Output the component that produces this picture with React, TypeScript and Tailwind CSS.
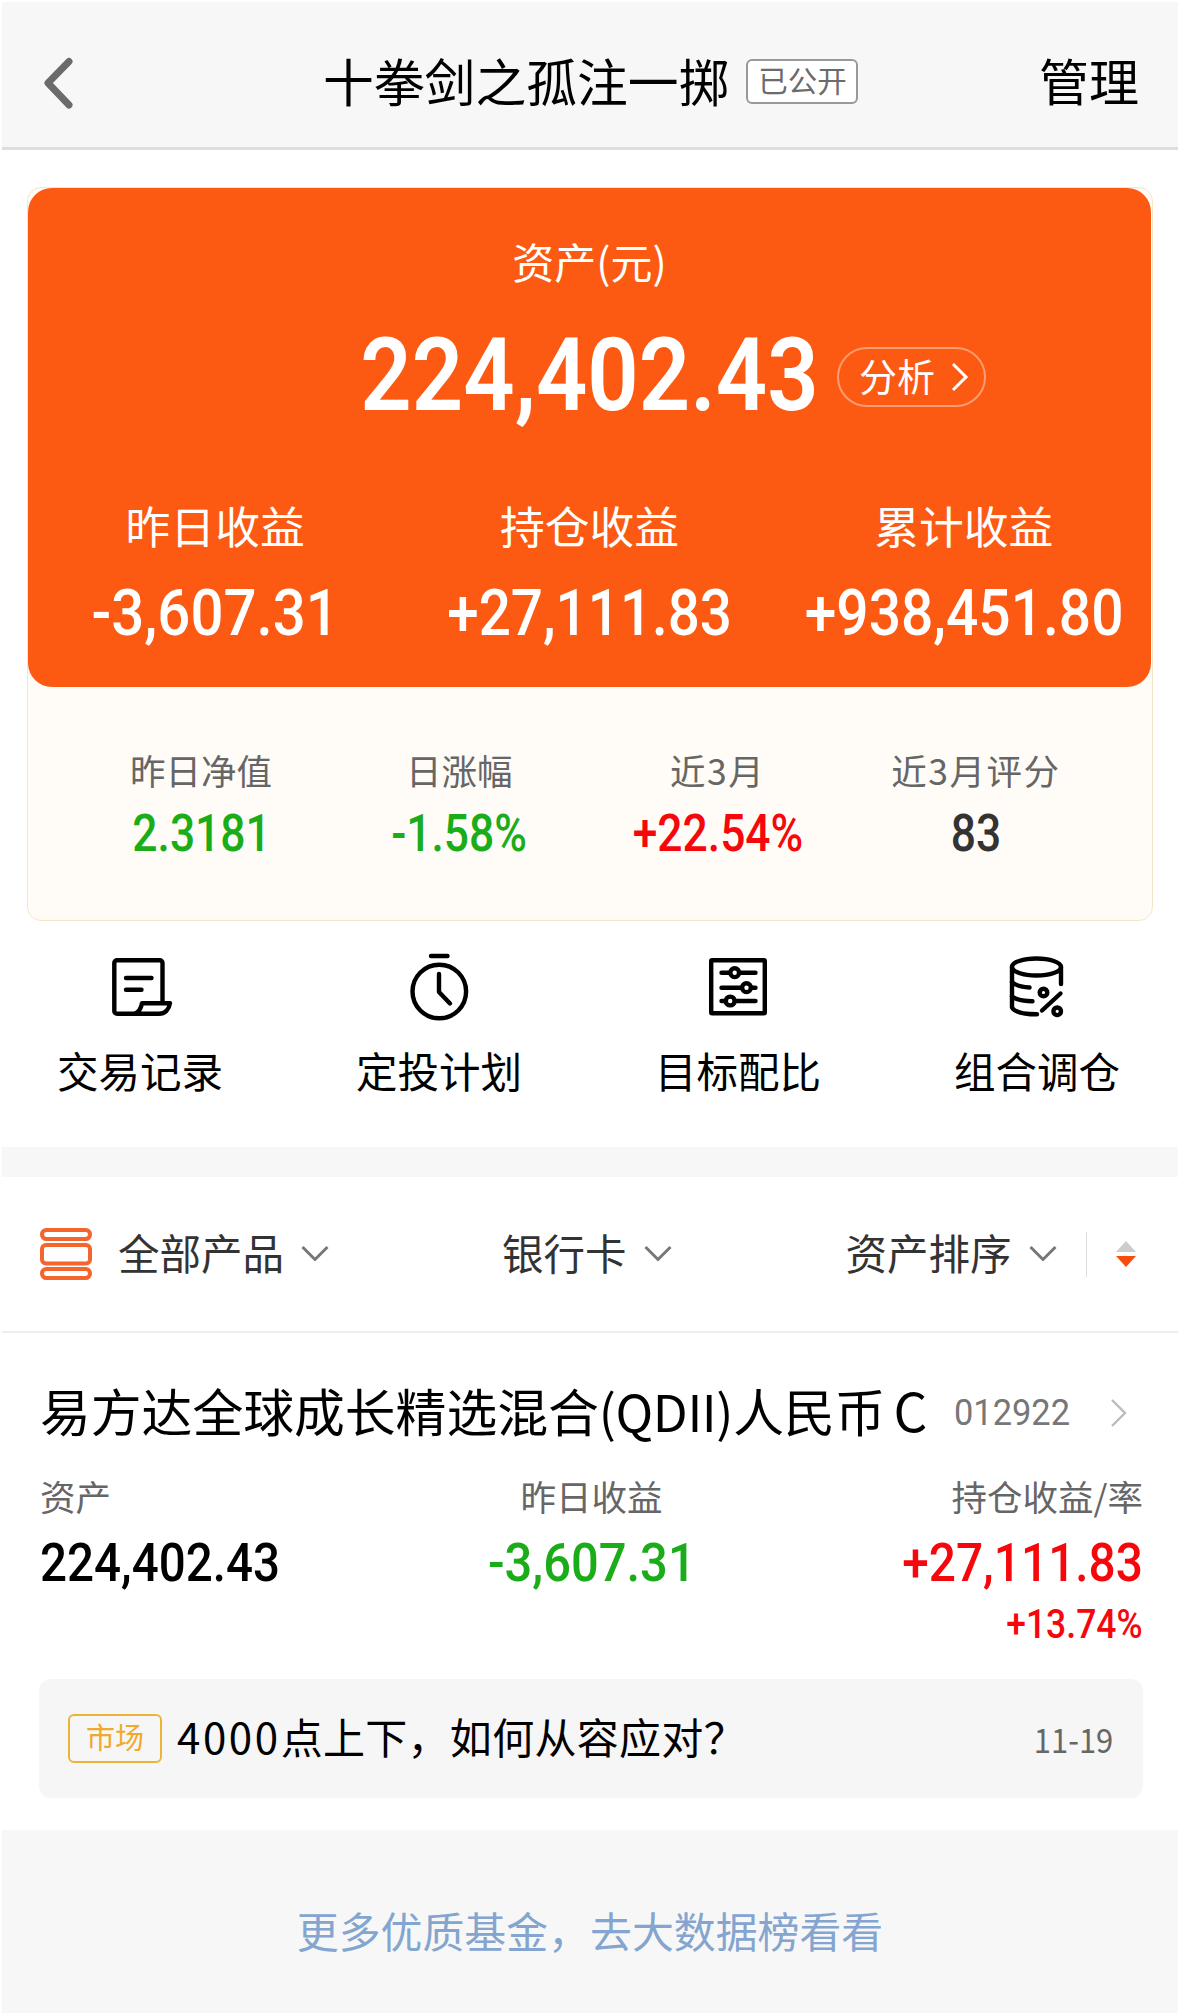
import type { ReactNode } from "react";

const SUMMARY = [
  { label: "昨日收益", value: "-3,607.31", scale: "scale-x-[0.895]" },
  { label: "持仓收益", value: "+27,111.83", scale: "scale-x-[0.87]" },
  { label: "累计收益", value: "+938,451.80", scale: "scale-x-[0.875]" },
];

const STATS = [
  { label: "昨日净值", value: "2.3181", color: "text-[#1aad19]", spacing: "" },
  { label: "日涨幅", value: "-1.58%", color: "text-[#1aad19]", spacing: "" },
  { label: "近3月", value: "+22.54%", color: "text-[#f5070b]", spacing: "tracking-[1.500px]" },
  { label: "近3月评分", value: "83", color: "text-[#333333]", spacing: "tracking-[1.500px]" },
];

function ActionIcon({ children }: { children: ReactNode }) {
  return (
    <svg
      viewBox="0 0 72 72"
      className="size-[72px]"
      fill="none"
      stroke="#000"
      strokeWidth="4.4"
      strokeLinecap="round"
      strokeLinejoin="round"
    >
      {children}
    </svg>
  );
}

const ACTIONS = [
  {
    label: "交易记录",
    icon: (
      <>
        <path d="M58.500 50V11A2.800 2.800 0 0 0 55.700 8.200H13.100A2.800 2.800 0 0 0 10.300 11V59A2.800 2.800 0 0 0 13.100 61.800H55C61 61.800 65 57.500 66 51.200H38C37 57.500 34.500 61 29.500 61.800" />
        <path d="M22 26H47.500M22 37.800H37.500" />
      </>
    ),
  },
  {
    label: "定投计划",
    icon: (
      <>
        <circle cx="36.300" cy="39.500" r="26.800" />
        <path d="M28 4H44.500M36 22V40L47 51.500" />
      </>
    ),
  },
  {
    label: "目标配比",
    icon: (
      <>
        <rect x="9.200" y="8.200" width="53.600" height="53" rx="1" />
        <path d="M19.500 20.700H53.500M19.500 35.700H53.500M19.500 49H53.500" />
        <circle cx="32.700" cy="20.700" r="4.400" fill="#fff" />
        <circle cx="44.500" cy="35.700" r="4.400" fill="#fff" />
        <circle cx="28.200" cy="49" r="4.400" fill="#fff" />
      </>
    ),
  },
  {
    label: "组合调仓",
    icon: (
      <>
        <ellipse cx="35.500" cy="15" rx="24.500" ry="8.500" />
        <path d="M11 15V55.500C13.500 60 23.500 62.300 36 62.300M60 15V32" />
        <path d="M11 30C14.500 33.500 20.500 35 28.500 35.500M11 44.500C15.500 48 22.500 49.200 31.500 49.200" />
        <path d="M59.500 41.500L41 58.500" />
        <circle cx="42.500" cy="40.500" r="3.800" />
        <circle cx="56.200" cy="59.300" r="3.800" />
      </>
    ),
  },
];

function ChevronDown() {
  return (
    <svg viewBox="0 0 28 18" className="h-[18px] w-7" fill="none" stroke="#777" strokeWidth="3">
      <path d="M1.500 2L14 14.500L26.500 2" />
    </svg>
  );
}

export default function App() {
  return (
    <div className="h-[2015px] w-[1180px] bg-white p-[2px] font-['Noto_Sans_CJK_SC',sans-serif] text-black">
      {/* Title bar */}
      <header className="relative flex h-[148px] items-center justify-between border-b-[3px] border-[#dedede] bg-[#f7f7f7] pr-[39px] pl-[40px]">
        <svg viewBox="0 0 32 52" className="mt-[16px] h-[52px] w-8" fill="none" stroke="#6b6b6b" strokeWidth="7" strokeLinecap="round" strokeLinejoin="round">
          <path d="M27 4.500L6 26L27 48" />
        </svg>
        <div className="absolute top-[38px] left-[321px] flex items-center">
          <h1 className="text-[50.800px] leading-[80px]">十拳剑之孤注一掷</h1>
          <span className="mt-[2px] ml-[17px] h-[45px] w-[112px] rounded-md border-2 border-[#999] bg-white text-center text-[29.500px] leading-[37px] text-[#6b6b6b]">
            已公开
          </span>
        </div>
        <button className="mt-[8px] text-[50px] leading-[80px]">管理</button>
      </header>

      {/* Asset card */}
      <section className="mx-[25px] mt-[37px] h-[734px] rounded-[14px] border border-[#f6e6c8] bg-[#fffcf7] text-center">
        <div className="mr-px h-[499px] rounded-[24px] bg-[#fc5a12] pt-[41px] text-white">
          <div className="text-[42px] leading-[64px]">资产(元)</div>
          <div className="relative mt-[22px] font-['Roboto'] text-[102px] leading-[120px] font-semibold">
            <span className="inline-block scale-x-[0.883]">224,402.43</span>
            <button className="absolute top-[32px] left-[809px] flex h-[60px] w-[149px] items-center rounded-full border-2 border-white/40 pl-[20px] font-['Noto_Sans_CJK_SC'] text-[38px] leading-none font-normal">
              <span className="-mt-[4px]">分析</span>
              <svg viewBox="0 0 18 30" className="ml-[16px] h-[30px] w-[18px]" fill="none" stroke="currentColor" strokeWidth="3">
                <path d="M2 2L15 15L2 28" />
              </svg>
            </button>
          </div>
          <div className="mt-[56px] grid grid-cols-3">
            {SUMMARY.map((s) => (
              <div key={s.label}>
                <div className="text-[44.800px] leading-[68px]">{s.label}</div>
                <div className="mt-[15px] font-['Roboto'] text-[65px] leading-[78px] font-medium">
                  <span className={`inline-block ${s.scale}`}>{s.value}</span>
                </div>
              </div>
            ))}
          </div>
        </div>
        <div className="mr-[47px] ml-[44px] grid grid-cols-4 pt-[56px]">
          {STATS.map((s) => (
            <div key={s.label}>
              <div className={`text-[35.500px] leading-[54px] text-[#666] ${s.spacing}`}>{s.label}</div>
              <div className={`mt-[7px] font-['Roboto'] text-[51px] leading-[60px] font-medium ${s.color}`}>
                <span className="inline-block scale-x-[0.87]">{s.value}</span>
              </div>
            </div>
          ))}
        </div>
      </section>

      {/* Quick actions */}
      <nav className="flex h-[226px] justify-between pt-[31px] pr-[58px] pl-[55px]">
        {ACTIONS.map((a) => (
          <div key={a.label} className="flex flex-col items-center">
            <ActionIcon>{a.icon}</ActionIcon>
            <span className="mt-[15px] text-[41.500px] leading-[62px]">{a.label}</span>
          </div>
        ))}
      </nav>
      <div className="h-[30px] bg-[#f7f7f7]" />

      {/* Filters */}
      <div className="flex h-[156px] items-center border-b-2 border-[#eeeeee] pl-[38px] text-[41.500px] text-[#333]">
        <svg viewBox="0 0 52 52" className="size-[52px]" fill="#fff" stroke="#f4642c" strokeWidth="4">
          <rect x="2" y="2" width="48" height="9" rx="4.400" />
          <rect x="2" y="17" width="48" height="18.500" rx="4" />
          <rect x="2" y="41" width="48" height="9" rx="4.400" />
        </svg>
        <span className="mr-[17px] -mt-[3px] ml-[26px]">全部产品</span>
        <ChevronDown />
        <span className="mr-[17px] -mt-[3px] ml-[173px]">银行卡</span>
        <ChevronDown />
        <span className="mr-[17px] -mt-[3px] ml-[174px]">资产排序</span>
        <ChevronDown />
        <div className="ml-[29px] h-[45px] w-px bg-[#ddd]" />
        <svg viewBox="0 0 20 26" className="ml-[29px] h-[26px] w-5">
          <path d="M10 0L20 11H0Z" fill="#ccc" />
          <path d="M0 15H20L10 26Z" fill="#fa4b0c" />
        </svg>
      </div>

      {/* Fund */}
      <section className="h-[497px] pt-[42px] pr-[35px] pl-[38px]">
        <div className="flex h-[76px] items-center">
          <h2 className="-mt-[7px] w-[914px] text-[50.800px] whitespace-nowrap">
            易方达全球成长精选混合<span className="tracking-[-0.400px]">(QDII)</span>人民币<span className="ml-[8px] text-[53px]">C</span>
          </h2>
          <span className="inline-block origin-left scale-x-[0.93] font-['Roboto'] text-[37px] text-[#777]">012922</span>
          <svg viewBox="0 0 18 30" className="ml-[31px] h-[30px] w-[18px]" fill="none" stroke="#bbb" strokeWidth="2.400">
            <path d="M2 2L15 15L2 28" />
          </svg>
        </div>
        <div className="mt-[18px] grid grid-cols-3 text-[35.500px] leading-[54px] text-[#666]">
          <span>资产</span>
          <span className="text-center">昨日收益</span>
          <span className="text-right">持仓收益/率</span>
        </div>
        <div className="mt-[8px] grid grid-cols-3 font-['Roboto'] text-[54px] leading-[64px] font-medium">
          <div>
            <span className="inline-block origin-left scale-x-[0.88]">224,402.43</span>
          </div>
          <div className="text-center text-[#1aad19]">
            <span className="inline-block scale-x-[0.905]">-3,607.31</span>
          </div>
          <div className="text-right text-[#f5070b]">
            <span className="inline-block origin-right scale-x-[0.885]">+27,111.83</span>
            <div className="text-[41px] leading-[58px]">
              <span className="inline-block origin-right scale-x-[0.865]">+13.74%</span>
            </div>
          </div>
        </div>
        <div className="mt-[26px] -ml-px flex h-[119px] items-center rounded-xl bg-[#f6f6f6] pr-[30px] pl-[29px]">
          <span className="h-[49px] w-[94px] rounded-md border-2 border-[#efb336] text-center text-[29px] leading-[41px] text-[#efa92c]">
            市场
          </span>
          <span className="-mt-[6px] ml-[15px] flex-1 text-[42px]">
            <span className="tracking-[2.600px]">4000</span>
            <span className="tracking-[0.300px]">点上下，如何从容应对？</span>
          </span>
          <span className="inline-block origin-right scale-x-[0.91] text-[34px] text-[#666]">11-19</span>
        </div>
      </section>

      <footer className="h-[183px] bg-[#f7f7f7] pt-[68px] text-center text-[41.900px] leading-[64px] text-[#84a5cf]">
        更多优质基金，去大数据榜看看
      </footer>
    </div>
  );
}
